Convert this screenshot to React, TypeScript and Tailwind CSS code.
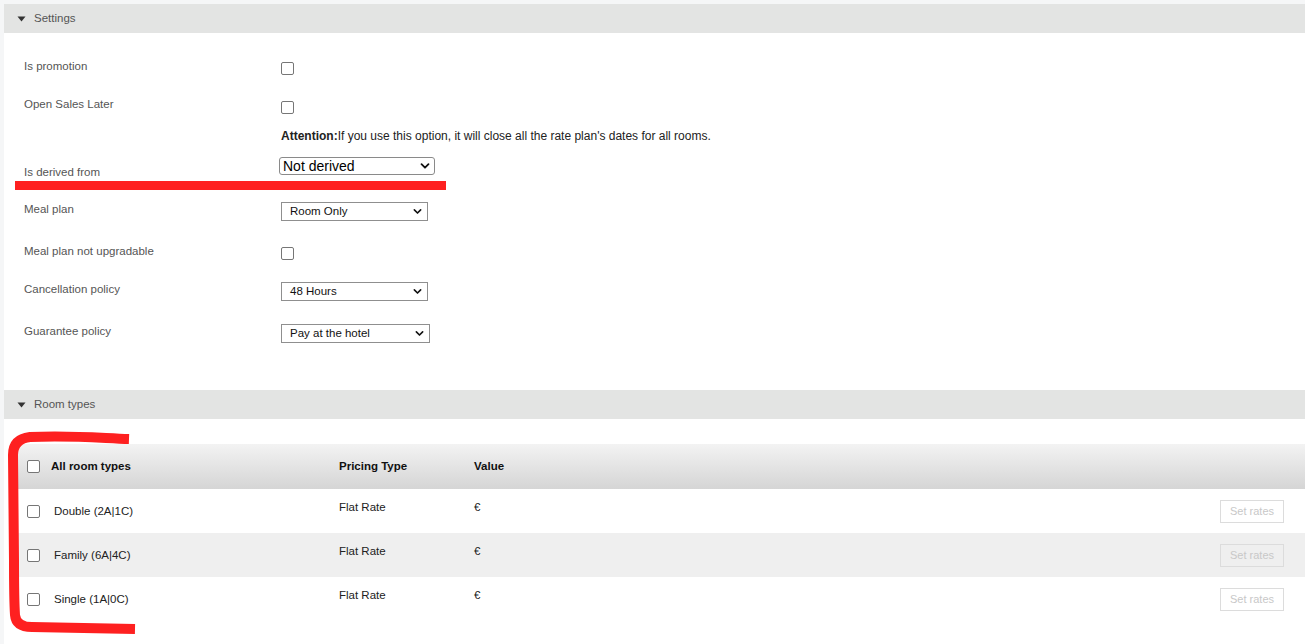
import React from 'react';

const Checkbox: React.FC = () => (
  <span className="block w-[13px] h-[13px] rounded-[2px] border border-[#767676] bg-white" />
);

const Chevron: React.FC<{ size?: number }> = ({ size = 9 }) => (
  <svg width={size} height={size} viewBox="0 0 10 10" className="shrink-0">
    <path d="M1.5 3.2 L5 6.7 L8.5 3.2" fill="none" stroke="#111" strokeWidth="1.8" strokeLinecap="round" strokeLinejoin="round" />
  </svg>
);

const Select: React.FC<{ value: string; width: string }> = ({ value, width }) => (
  <div className={`${width} h-[19px] flex items-center justify-between pl-[8px] pr-[5px] border border-[#8f8f8f] bg-white text-[11.5px] text-[#111]`}>
    <span>{value}</span>
    <Chevron />
  </div>
);

const SectionHeader: React.FC<{ title: string }> = ({ title }) => (
  <div className="h-[29px] bg-[#e3e4e3] flex items-center pl-[13px] gap-[8px] text-[11.5px] text-[#555]">
    <svg width="9" height="6" viewBox="0 0 9 6">
      <path d="M0.5 0.5 H8.5 L4.5 5.5 Z" fill="#333" />
    </svg>
    <span className="pt-[1px]">{title}</span>
  </div>
);

const rooms = ['Double (2A|1C)', 'Family (6A|4C)', 'Single (1A|0C)'];

export default function App() {
  return (
    <div
      className="relative w-[1305px] h-[644px] overflow-hidden bg-[#f5f6f7] pl-[4px] pt-[4px]"
      style={{ fontFamily: '"Liberation Sans", Arial, Helvetica, sans-serif' }}
    >
      <div className="bg-white h-full">
        {/* Settings */}
        <SectionHeader title="Settings" />
        <div className="pt-[22px] h-[357px] text-[11.5px] text-[#555]">
          <div className="flex h-[38px]">
            <div className="w-[277px] pl-[20px] pt-[3px]">Is promotion</div>
            <div className="pt-[7px]"><Checkbox /></div>
          </div>
          <div className="flex h-[30px]">
            <div className="w-[277px] pl-[20px] pt-[3px]">Open Sales Later</div>
            <div className="pt-[8px]"><Checkbox /></div>
          </div>
          <div className="flex h-[18px] pt-[4px]">
            <div className="w-[277px]" />
            <div className="text-[12px] text-[#222]">
              <span className="font-bold">Attention:</span>If you use this option, it will close all the rate plan's dates for all rooms.
            </div>
          </div>
          <div className="flex h-[54px]">
            <div className="w-[277px] pl-[20px] pt-[23px]">Is derived from</div>
            <div className="pt-[16px] -ml-[2px]">
              <div className="w-[156px] h-[18px] flex items-center justify-between pl-[3px] pr-[4px] rounded-[3px] border border-[#8a8a8a] bg-white text-[14px] text-black leading-none">
                <span>Not derived</span>
                <Chevron size={10} />
              </div>
            </div>
          </div>
          <div className="flex h-[45px]">
            <div className="w-[277px] pl-[20px] pt-[6px]">Meal plan</div>
            <div className="pt-[7px]"><Select value="Room Only" width="w-[147px]" /></div>
          </div>
          <div className="flex h-[35px]">
            <div className="w-[277px] pl-[20px] pt-[3px]">Meal plan not upgradable</div>
            <div className="pt-[7px]"><Checkbox /></div>
          </div>
          <div className="flex h-[42px]">
            <div className="w-[277px] pl-[20px] pt-[6px]">Cancellation policy</div>
            <div className="pt-[7px]"><Select value="48 Hours" width="w-[147px]" /></div>
          </div>
          <div className="flex h-[42px]">
            <div className="w-[277px] pl-[20px] pt-[6px]">Guarantee policy</div>
            <div className="pt-[7px]"><Select value="Pay at the hotel" width="w-[149px]" /></div>
          </div>
        </div>

        {/* Room types */}
        <SectionHeader title="Room types" />
        <div className="pt-[25px] pl-[12px]">
          <div className="h-[45px] flex items-center bg-gradient-to-b from-[#f3f3f3] to-[#d5d5d5] text-[11.5px] font-bold text-[#111]">
            <div className="w-[323px] flex items-center pl-[11px] gap-[11px]">
              <Checkbox />
              <span className="pt-[1px]">All room types</span>
            </div>
            <div className="w-[135px] pt-[1px]">Pricing Type</div>
            <div className="pt-[1px]">Value</div>
          </div>
          {rooms.map((r, i) => (
            <div
              key={r}
              className={`h-[44px] flex items-center text-[11.5px] text-[#222] ${i === 1 ? 'bg-[#efefef]' : 'bg-white'}`}
            >
              <div className="w-[323px] flex items-center pl-[11px] gap-[14px] pt-[1px]">
                <Checkbox />
                <span>{r}</span>
              </div>
              <div className="w-[135px] self-start pt-[10px]">Flat Rate</div>
              <div className="self-start pt-[10px]">€</div>
              <div className="ml-auto mr-[21px]">
                <div className="w-[64px] h-[23px] flex items-center justify-center border border-[#dcdcdc] text-[11px] text-[#c8c8c8]">
                  Set rates
                </div>
              </div>
            </div>
          ))}
        </div>
      </div>

      {/* red annotations */}
      <svg className="absolute inset-0 pointer-events-none" width="1305" height="644">
        <path d="M15 185.5 L446 185.5" stroke="#fe2020" strokeWidth="9" />
        <path
          d="M129 439 C100 438, 70 435, 30 437 Q13 439 13 455 L14 560 Q14 600 15 615 Q16 627 32 627 L135 629"
          fill="none"
          stroke="#fe2020"
          strokeWidth="10"
          strokeLinecap="butt"
          strokeLinejoin="round"
        />
      </svg>
    </div>
  );
}
